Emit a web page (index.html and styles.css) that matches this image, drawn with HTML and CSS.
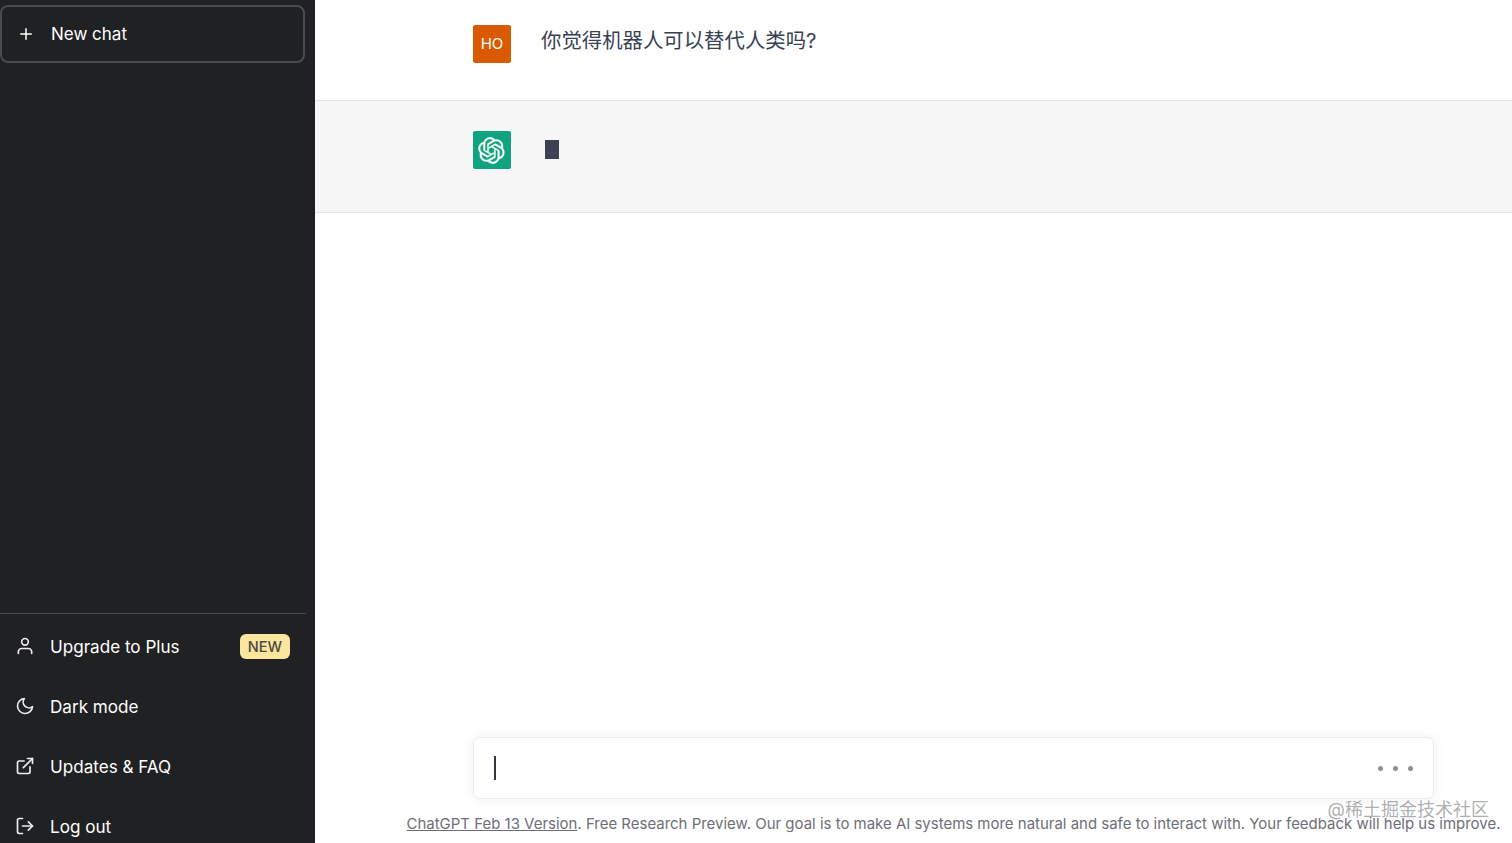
FILE: index.html
```html
<!DOCTYPE html>
<html lang="zh-CN">
<head>
    <meta charset="UTF-8">
    <meta name="viewport" content="width=device-width, initial-scale=1.0">
    <title>New chat</title>
    <link rel="stylesheet" href="styles.css">
</head>
<body>
    <div class="page">
        <!-- sidebar -->
        <aside class="sidebar">
            <a class="new-chat">
                <svg class="icon-plus" viewBox="0 0 24 24"><line x1="12" y1="5" x2="12" y2="19"></line><line x1="5" y1="12" x2="19" y2="12"></line></svg>
                New chat
            </a>
            <div class="spacer"></div>
            <nav class="menu">
                <a class="menu-item">
                    <svg class="icon" viewBox="0 0 24 24"><path d="M20 21v-2a4 4 0 0 0-4-4H8a4 4 0 0 0-4 4v2"></path><circle cx="12" cy="7" r="4"></circle></svg>
                    <span class="menu-label">Upgrade to Plus</span>
                    <span class="badge">NEW</span>
                </a>
                <a class="menu-item">
                    <svg class="icon" viewBox="0 0 24 24"><path d="M21 12.79A9 9 0 1 1 11.21 3 7 7 0 0 0 21 12.79z"></path></svg>
                    <span class="menu-label">Dark mode</span>
                </a>
                <a class="menu-item">
                    <svg class="icon" viewBox="0 0 24 24"><path d="M18 13v6a2 2 0 0 1-2 2H5a2 2 0 0 1-2-2V8a2 2 0 0 1 2-2h6"></path><polyline points="15 3 21 3 21 9"></polyline><line x1="10" y1="14" x2="21" y2="3"></line></svg>
                    <span class="menu-label">Updates &amp; FAQ</span>
                </a>
                <a class="menu-item">
                    <svg class="icon" viewBox="0 0 24 24"><path d="M9 21H5a2 2 0 0 1-2-2V5a2 2 0 0 1 2-2h4"></path><polyline points="16 17 21 12 16 7"></polyline><line x1="21" y1="12" x2="9" y2="12"></line></svg>
                    <span class="menu-label">Log out</span>
                </a>
            </nav>
        </aside>

        <!-- conversation -->
        <main class="main">
            <div class="row row-user">
                <div class="row-inner">
                    <div class="avatar avatar-user">HO</div>
                    <p class="message">你觉得机器人可以替代人类吗?</p>
                </div>
            </div>
            <div class="row row-bot">
                <div class="row-inner">
                    <div class="avatar avatar-bot">
                        <svg class="logo" viewBox="0 0 41 41"><path d="M37.5324 16.8707C37.9808 15.5241 38.1363 14.0974 37.9886 12.6859C37.8409 11.2744 37.3934 9.91076 36.676 8.68622C35.6126 6.83404 33.9882 5.3676 32.0373 4.4985C30.0864 3.62941 27.9098 3.40259 25.8215 3.85078C24.8796 2.7893 23.7219 1.94125 22.4257 1.36341C21.1295 0.785575 19.7249 0.491269 18.3058 0.500197C16.1708 0.495044 14.0893 1.16803 12.3614 2.42214C10.6335 3.67624 9.34853 5.44666 8.6917 7.47815C7.30085 7.76286 5.98686 8.3414 4.8377 9.17505C3.68854 10.0087 2.73073 11.0782 2.02839 12.312C0.956464 14.1591 0.498905 16.2988 0.721698 18.4228C0.944492 20.5467 1.83612 22.5449 3.268 24.1293C2.81966 25.4759 2.66413 26.9026 2.81182 28.3141C2.95951 29.7256 3.40701 31.0892 4.12437 32.3138C5.18791 34.1659 6.8123 35.6322 8.76321 36.5013C10.7141 37.3704 12.8907 37.5973 14.9789 37.1492C15.9208 38.2107 17.0786 39.0587 18.3747 39.6366C19.6709 40.2144 21.0755 40.5087 22.4946 40.4998C24.6307 40.5054 26.7133 39.8321 28.4418 38.5772C30.1704 37.3223 31.4556 35.5506 32.1119 33.5179C33.5027 33.2332 34.8167 32.6547 35.9659 31.821C37.115 30.9874 38.0728 29.9178 38.7752 28.684C39.8458 26.8371 40.3023 24.6979 40.0789 22.5748C39.8556 20.4517 38.9639 18.4544 37.5324 16.8707ZM22.4978 37.8849C20.7443 37.8874 19.0459 37.2733 17.6994 36.1501C17.7601 36.117 17.8666 36.0586 17.936 36.0161L25.9004 31.4156C26.1003 31.3019 26.2663 31.137 26.3813 30.9378C26.4964 30.7386 26.5563 30.5124 26.5549 30.2825V19.0542L29.9213 20.998C29.9389 21.0068 29.9541 21.0198 29.9656 21.0359C29.977 21.052 29.9842 21.0707 29.9867 21.0902V30.3889C29.9842 32.375 29.1946 34.2791 27.7909 35.6841C26.3872 37.0892 24.4838 37.8806 22.4978 37.8849ZM6.39227 31.0064C5.51397 29.4888 5.19742 27.7107 5.49804 25.9832C5.55718 26.0187 5.66048 26.0818 5.73461 26.1244L13.699 30.7248C13.8975 30.8408 14.1233 30.902 14.3532 30.902C14.583 30.902 14.8088 30.8408 15.0073 30.7248L24.731 25.1103V28.9979C24.7321 29.0177 24.7283 29.0376 24.7199 29.0556C24.7115 29.0736 24.6988 29.0893 24.6829 29.1012L16.6317 33.7497C14.9096 34.7416 12.8643 35.0097 10.9447 34.4954C9.02506 33.9811 7.38785 32.7263 6.39227 31.0064ZM4.29707 13.6194C5.17156 12.0998 6.55279 10.9364 8.19885 10.3327C8.19885 10.4013 8.19491 10.5228 8.19491 10.6071V19.808C8.19351 20.0378 8.25334 20.2638 8.36823 20.4629C8.48312 20.6619 8.64893 20.8267 8.84863 20.9404L18.5723 26.5542L15.206 28.4979C15.1894 28.5089 15.1703 28.5155 15.1505 28.5173C15.1307 28.5191 15.1107 28.516 15.0924 28.5082L7.04046 23.8557C5.32135 22.8601 4.06716 21.2235 3.55289 19.3046C3.03862 17.3858 3.30624 15.3413 4.29707 13.6194ZM31.955 20.0556L22.2312 14.4411L25.5976 12.4981C25.6142 12.4872 25.6333 12.4805 25.6531 12.4787C25.6729 12.4769 25.6928 12.4801 25.7111 12.4879L33.7631 17.1364C34.9967 17.849 36.0017 18.8982 36.6606 20.1613C37.3194 21.4244 37.6047 22.849 37.4832 24.2684C37.3617 25.6878 36.8382 27.0432 35.9743 28.1759C35.1103 29.3086 33.9415 30.1717 32.6047 30.6641C32.6047 30.5947 32.6047 30.4733 32.6047 30.3889V21.188C32.6066 20.9586 32.5474 20.7328 32.4332 20.5338C32.319 20.3348 32.154 20.1698 31.955 20.0556ZM35.3055 15.0128C35.2464 14.9765 35.1431 14.9142 35.069 14.8717L27.1045 10.2712C26.906 10.1554 26.6803 10.0943 26.4504 10.0943C26.2206 10.0943 25.9948 10.1554 25.7963 10.2712L16.0726 15.8858V11.9982C16.0715 11.9783 16.0753 11.9585 16.0837 11.9405C16.0921 11.9225 16.1048 11.9068 16.1207 11.8949L24.1719 7.25025C25.4053 6.53903 26.8158 6.19376 28.2383 6.25482C29.6608 6.31589 31.0364 6.78077 32.2044 7.59508C33.3723 8.40939 34.2842 9.53945 34.8334 10.8531C35.3826 12.1667 35.5464 13.6095 35.3055 15.0128ZM14.2424 21.9419L10.8752 19.9981C10.8576 19.9893 10.8423 19.9763 10.8309 19.9602C10.8195 19.9441 10.8122 19.9254 10.8098 19.9058V10.6071C10.8107 9.18295 11.2173 7.78848 11.9819 6.58696C12.7466 5.38544 13.8377 4.42659 15.1275 3.82264C16.4173 3.21869 17.8524 2.99464 19.2649 3.1767C20.6775 3.35876 22.0089 3.93941 23.1034 4.85067C23.0427 4.88379 22.937 4.94215 22.8668 4.98473L14.9024 9.58517C14.7025 9.69878 14.5366 9.86356 14.4215 10.0626C14.3065 10.2616 14.2466 10.4877 14.2479 10.7175L14.2424 21.9419ZM16.071 17.9991L20.4018 15.4978L24.7325 17.9975V22.9985L20.4018 25.4983L16.071 22.9985V17.9991Z"></path></svg>
                    </div>
                    <span class="typing-block"></span>
                </div>
            </div>
            <div class="spacer"></div>
            <div class="composer">
                <span class="caret"></span>
                <div class="dots"><i></i><i></i><i></i></div>
            </div>
            <p class="footnote"><a class="footnote-link">ChatGPT Feb 13 Version</a>. Free Research Preview. Our goal is to make AI systems more natural and safe to interact with. Your feedback will help us improve.</p>
        </main>
        <div class="watermark">@稀土掘金技术社区</div>
    </div>
</body>
</html>
```

FILE: styles.css
```css
* {
    box-sizing: border-box;
}
html, body {
    margin: 0;
    height: 100%;
    overflow: hidden;
}
body {
    font-family: Inter, "Noto Sans CJK SC", sans-serif;
    background-color: #fff;
}
.page {
    position: relative;
    display: flex;
    height: 843px;
    overflow: hidden;
}
.spacer {
    flex: 1;
}

/* sidebar */
.sidebar {
    flex: none;
    display: flex;
    flex-direction: column;
    width: 315px;
    height: 856px;
    padding-top: 5px;
    background-color: #202123;
    color: #fff;
}
.new-chat {
    display: flex;
    align-items: center;
    gap: 16px;
    width: 305px;
    height: 58px;
    padding-left: 15px;
    border: 2px solid #4a4b4e;
    border-radius: 8px;
    font-size: 17px;
}
.icon-plus {
    width: 18px;
    height: 18px;
    fill: none;
    stroke: #fff;
    stroke-width: 2;
    stroke-linecap: round;
}
.menu {
    width: 306px;
    padding-top: 2px;
    border-top: 1px solid #4a4b4e;
}
.menu-item {
    display: flex;
    align-items: center;
    gap: 15px;
    height: 60px;
    padding: 0 16px 0 15px;
    font-size: 17.1px;
}
.icon {
    flex: none;
    width: 20px;
    height: 20px;
    fill: none;
    stroke: #ececf1;
    stroke-width: 2;
    stroke-linecap: round;
    stroke-linejoin: round;
}
.menu-label {
    flex: 1;
}
.badge {
    padding: 3px 8px;
    border-radius: 6px;
    background-color: #fae69e;
    color: #4a4a42;
    font-size: 14.5px;
    font-weight: 500;
    line-height: 19px;
}

/* conversation */
.main {
    flex: none;
    display: flex;
    flex-direction: column;
    width: 1277px;
    height: 843px;
}
.row {
    border-bottom: 1px solid #e4e4e7;
}
.row-user {
    height: 101px;
}
.row-bot {
    height: 112px;
    background-color: #f7f7f8;
}
.row-inner {
    display: flex;
    gap: 30px;
    width: 961px;
    margin: 0 auto;
}
.row-user .row-inner {
    padding-top: 25px;
}
.row-bot .row-inner {
    padding-top: 30px;
}
.avatar {
    flex: none;
    display: flex;
    align-items: center;
    justify-content: center;
    width: 38px;
    height: 38px;
    border-radius: 2px;
    color: #fff;
}
.avatar-user {
    padding-bottom: 2px;
    background-color: #d95a00;
    font-size: 15px;
}
.avatar-bot {
    padding-right: 1px;
    background-color: #10a37f;
}
.logo {
    width: 27px;
    height: 27px;
    fill: #fff;
    stroke: #fff;
    stroke-width: 0.5;
}
.message {
    margin: 0;
    color: #374151;
    font-size: 20.4px;
    line-height: 32px;
}
.typing-block {
    width: 14px;
    height: 19px;
    margin: 9px 0 0 4px;
    background-color: #3e4154;
}

/* input */
.composer {
    flex: none;
    display: flex;
    align-items: center;
    justify-content: space-between;
    width: 961px;
    height: 62px;
    margin: 0 auto;
    padding: 0 20px;
    border: 1px solid #ececec;
    border-radius: 7px;
    background-color: #fff;
    box-shadow: 0 0 12px rgba(0, 0, 0, 0.07);
}
.caret {
    width: 2px;
    height: 24px;
    background-color: #343541;
}
.dots {
    display: flex;
    gap: 10px;
}
.dots i {
    width: 5px;
    height: 5px;
    border-radius: 50%;
    background-color: #8e8e95;
}
.footnote {
    flex: none;
    height: 44px;
    margin: 0;
    padding-top: 15px;
    color: #6e6f77;
    font-size: 14.97px;
    line-height: 20px;
    text-align: center;
    white-space: nowrap;
}
.footnote-link {
    text-decoration: underline;
}
.watermark {
    position: absolute;
    top: 798px;
    right: 23px;
    color: rgba(120, 120, 125, 0.6);
    font-size: 18px;
    line-height: 24px;
}
```
